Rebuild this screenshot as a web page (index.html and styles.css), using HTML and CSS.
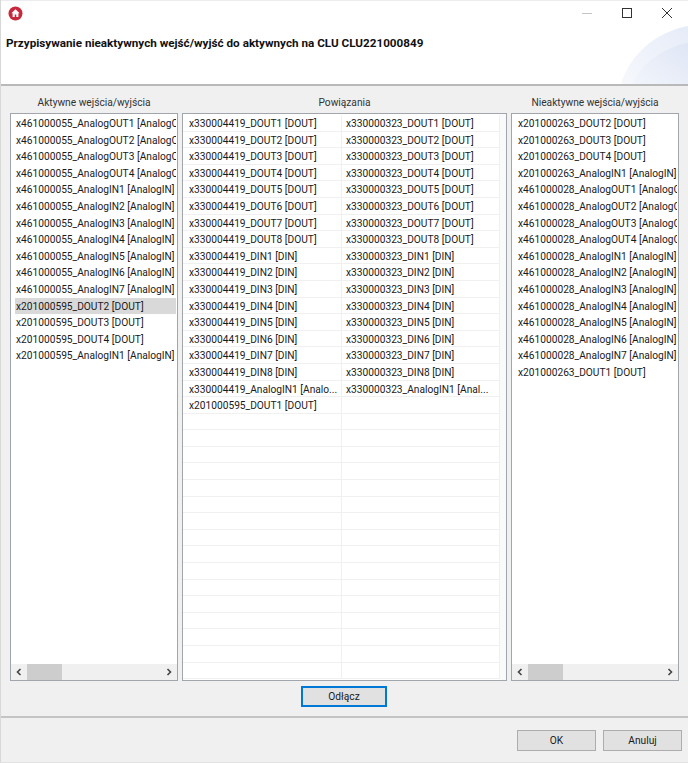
FILE: index.html
```html
<!DOCTYPE html>
<html lang="pl">
<head>
<meta charset="utf-8">
<title>Przypisywanie</title>
<link rel="stylesheet" href="styles.css">
</head>
<body>
<div class="window">
  <header class="head">
    <div class="titlebar">
      <svg class="app-icon" width="15" height="15" viewBox="0 0 15 15"><circle cx="7.5" cy="7.5" r="7" fill="#c8283c"/><path d="M7.5 3.2 3.4 7.2h1.2v3.9h2.1V8.6h1.6v2.5h2.1V7.2h1.2z" fill="#fff"/></svg>
      <div class="controls">
        <svg width="12" height="12" viewBox="0 0 12 12"><path d="M1 6.5h10" stroke="#c4c4c4" fill="none"/></svg>
        <svg width="12" height="12" viewBox="0 0 12 12"><rect x="1.5" y="1.5" width="9" height="9" stroke="#333" fill="none"/></svg>
        <svg width="12" height="12" viewBox="0 0 12 12"><path d="M1 1l10 10M11 1 1 11" stroke="#333" fill="none"/></svg>
      </div>
    </div>
    <h1 class="title">Przypisywanie nieaktywnych wejść/wyjść do aktywnych na CLU CLU221000849</h1>
    <svg class="swoosh" width="67" height="58" viewBox="0 0 67 58">
      <defs>
        <linearGradient id="outer" x1="0" y1="1" x2="1" y2="0"><stop offset="0" stop-color="#f6f8fc"/><stop offset="1" stop-color="#e6ecf8"/></linearGradient>
        <linearGradient id="inner" x1="0" y1="1" x2="1" y2="0"><stop offset="0" stop-color="#f2f5fb"/><stop offset="1" stop-color="#dfe6f5"/></linearGradient>
      </defs>
      <path d="M0 58C8 30 34 6 67 0V58z" fill="url(#outer)"/>
      <path d="M11 58C22 36 42 22 67 17V58z" fill="url(#inner)"/>
    </svg>
  </header>
  <main class="content">
    <div class="labels">
      <div class="label side">Aktywne wejścia/wyjścia</div>
      <div class="label mid">Powiązania</div>
      <div class="label side">Nieaktywne wejścia/wyjścia</div>
    </div>
    <div class="panels">
      <section class="panel side">
        <ul class="list">
          <li>x461000055_AnalogOUT1 [AnalogOUT]</li>
          <li>x461000055_AnalogOUT2 [AnalogOUT]</li>
          <li>x461000055_AnalogOUT3 [AnalogOUT]</li>
          <li>x461000055_AnalogOUT4 [AnalogOUT]</li>
          <li>x461000055_AnalogIN1 [AnalogIN]</li>
          <li>x461000055_AnalogIN2 [AnalogIN]</li>
          <li>x461000055_AnalogIN3 [AnalogIN]</li>
          <li>x461000055_AnalogIN4 [AnalogIN]</li>
          <li>x461000055_AnalogIN5 [AnalogIN]</li>
          <li>x461000055_AnalogIN6 [AnalogIN]</li>
          <li>x461000055_AnalogIN7 [AnalogIN]</li>
          <li class="selected">x201000595_DOUT2 [DOUT]</li>
          <li>x201000595_DOUT3 [DOUT]</li>
          <li>x201000595_DOUT4 [DOUT]</li>
          <li>x201000595_AnalogIN1 [AnalogIN]</li>
        </ul>
        <div class="scrollbar">
          <svg width="8" height="8" viewBox="0 0 8 8"><path d="M5.5 1 2.5 4l3 3" fill="none" stroke="#444" stroke-width="1.6"/></svg>
          <div class="track"><div class="thumb"></div></div>
          <svg width="8" height="8" viewBox="0 0 8 8"><path d="M2.5 1l3 3-3 3" fill="none" stroke="#444" stroke-width="1.6"/></svg>
        </div>
      </section>
      <section class="panel mid panel-table">
        <div class="table">
          <div class="row"><span>x330004419_DOUT1 [DOUT]</span><span>x330000323_DOUT1 [DOUT]</span></div>
          <div class="row"><span>x330004419_DOUT2 [DOUT]</span><span>x330000323_DOUT2 [DOUT]</span></div>
          <div class="row"><span>x330004419_DOUT3 [DOUT]</span><span>x330000323_DOUT3 [DOUT]</span></div>
          <div class="row"><span>x330004419_DOUT4 [DOUT]</span><span>x330000323_DOUT4 [DOUT]</span></div>
          <div class="row"><span>x330004419_DOUT5 [DOUT]</span><span>x330000323_DOUT5 [DOUT]</span></div>
          <div class="row"><span>x330004419_DOUT6 [DOUT]</span><span>x330000323_DOUT6 [DOUT]</span></div>
          <div class="row"><span>x330004419_DOUT7 [DOUT]</span><span>x330000323_DOUT7 [DOUT]</span></div>
          <div class="row"><span>x330004419_DOUT8 [DOUT]</span><span>x330000323_DOUT8 [DOUT]</span></div>
          <div class="row"><span>x330004419_DIN1 [DIN]</span><span>x330000323_DIN1 [DIN]</span></div>
          <div class="row"><span>x330004419_DIN2 [DIN]</span><span>x330000323_DIN2 [DIN]</span></div>
          <div class="row"><span>x330004419_DIN3 [DIN]</span><span>x330000323_DIN3 [DIN]</span></div>
          <div class="row"><span>x330004419_DIN4 [DIN]</span><span>x330000323_DIN4 [DIN]</span></div>
          <div class="row"><span>x330004419_DIN5 [DIN]</span><span>x330000323_DIN5 [DIN]</span></div>
          <div class="row"><span>x330004419_DIN6 [DIN]</span><span>x330000323_DIN6 [DIN]</span></div>
          <div class="row"><span>x330004419_DIN7 [DIN]</span><span>x330000323_DIN7 [DIN]</span></div>
          <div class="row"><span>x330004419_DIN8 [DIN]</span><span>x330000323_DIN8 [DIN]</span></div>
          <div class="row"><span>x330004419_AnalogIN1 [Analo...</span><span>x330000323_AnalogIN1 [Anal...</span></div>
          <div class="row"><span>x201000595_DOUT1 [DOUT]</span><span></span></div>
          <div class="row"><span></span><span></span></div>
          <div class="row"><span></span><span></span></div>
          <div class="row"><span></span><span></span></div>
          <div class="row"><span></span><span></span></div>
          <div class="row"><span></span><span></span></div>
          <div class="row"><span></span><span></span></div>
          <div class="row"><span></span><span></span></div>
          <div class="row"><span></span><span></span></div>
          <div class="row"><span></span><span></span></div>
          <div class="row"><span></span><span></span></div>
          <div class="row"><span></span><span></span></div>
          <div class="row"><span></span><span></span></div>
          <div class="row"><span></span><span></span></div>
          <div class="row"><span></span><span></span></div>
          <div class="row"><span></span><span></span></div>
          <div class="row"><span></span><span></span></div>
        </div>
      </section>
      <section class="panel side">
        <ul class="list list-right">
          <li>x201000263_DOUT2 [DOUT]</li>
          <li>x201000263_DOUT3 [DOUT]</li>
          <li>x201000263_DOUT4 [DOUT]</li>
          <li>x201000263_AnalogIN1 [AnalogIN]</li>
          <li>x461000028_AnalogOUT1 [AnalogOUT]</li>
          <li>x461000028_AnalogOUT2 [AnalogOUT]</li>
          <li>x461000028_AnalogOUT3 [AnalogOUT]</li>
          <li>x461000028_AnalogOUT4 [AnalogOUT]</li>
          <li>x461000028_AnalogIN1 [AnalogIN]</li>
          <li>x461000028_AnalogIN2 [AnalogIN]</li>
          <li>x461000028_AnalogIN3 [AnalogIN]</li>
          <li>x461000028_AnalogIN4 [AnalogIN]</li>
          <li>x461000028_AnalogIN5 [AnalogIN]</li>
          <li>x461000028_AnalogIN6 [AnalogIN]</li>
          <li>x461000028_AnalogIN7 [AnalogIN]</li>
          <li>x201000263_DOUT1 [DOUT]</li>
        </ul>
        <div class="scrollbar">
          <svg width="8" height="8" viewBox="0 0 8 8"><path d="M5.5 1 2.5 4l3 3" fill="none" stroke="#444" stroke-width="1.6"/></svg>
          <div class="track"><div class="thumb"></div></div>
          <svg width="8" height="8" viewBox="0 0 8 8"><path d="M2.5 1l3 3-3 3" fill="none" stroke="#444" stroke-width="1.6"/></svg>
        </div>
      </section>
    </div>
    <div class="disconnect"><button class="btn focused">Odłącz</button></div>
  </main>
  <footer class="foot">
    <button class="btn plain">OK</button>
    <button class="btn plain">Anuluj</button>
  </footer>
</div>
</body>
</html>
```
FILE: styles.css
```css
* { box-sizing: border-box; }
html, body { margin: 0; padding: 0; }
body { width: 688px; height: 763px; overflow: hidden; background: #f0f0f0; font-family: Roboto, sans-serif; color: #1a1a1a; }
.window { height: 763px; display: flex; flex-direction: column; border-left: 1px solid #d8d8d8; border-bottom: 1px solid #e2e2e2; }
.head { position: relative; height: 86px; flex: none; background: #fff; border-top: 1px solid #ececec; border-bottom: 2px solid #b9b9b9; }
.titlebar { height: 34px; display: flex; justify-content: space-between; padding: 5px 15px 0 7px; }
.controls { display: flex; gap: 28px; padding-top: 1px; }
.title { margin: 0; padding-left: 5px; font-size: 11.7px; line-height: 16px; font-weight: 700; color: #111; }
.swoosh { position: absolute; right: 0; bottom: 0; }
.content { height: 630px; flex: none; padding: 8px 9px 0; display: flex; flex-direction: column; }
.labels { display: flex; gap: 4px; height: 19px; }
.label { font-size: 10.2px; line-height: 17px; text-align: center; color: #333; }
.side { width: 168px; flex: none; }
.mid { width: 325px; flex: none; }
.panels { display: flex; gap: 4px; height: 568px; flex: none; }
.panel { background: #fff; border: 1px solid #a0a6ab; display: flex; flex-direction: column; overflow: hidden; }
.panel-table { background: #f8fafc; }
.list { list-style: none; margin: 0; padding: 1px 1px 0 4px; flex: 1; min-height: 0; }
.list-right { padding-left: 5px; }
.list li { height: 16.6px; line-height: 17.6px; padding-left: 1px; font-size: 10.2px; white-space: nowrap; overflow: hidden; }
.list .selected { background: #d9d9d9; }
.scrollbar { height: 16px; flex: none; background: #f0f0f0; display: flex; align-items: center; padding: 0 4px; gap: 4px; }
.track { flex: 1; height: 16px; }
.thumb { width: 35px; height: 16px; background: #cdcdcd; }
.table { padding-top: 1px; margin-right: 6px; height: 100%; overflow: hidden; background: #fff; }
.row { display: flex; height: 16.6px; border-bottom: 1px solid #f0f0f0; }
.row span { width: 159px; flex: none; padding-left: 6px; font-size: 10.2px; line-height: 17.6px; white-space: nowrap; overflow: hidden; border-right: 1px solid #f0f0f0; }
.row span + span { width: 158px; padding-left: 4px; }
.disconnect { display: flex; justify-content: center; padding: 5px 1px 0 0; }
.btn { font-family: Roboto, sans-serif; font-size: 10.2px; color: #1a1a1a; background: #e1e1e1; padding: 0; height: 21px; width: 86px; }
.focused { border: 2px solid #0078d7; }
.plain { border: 1px solid #adadad; width: 79px; }
.foot { flex: 1; border-top: 2px solid #c4c4c4; display: flex; justify-content: flex-end; gap: 7px; padding: 12px 6px 0 0; }
```
